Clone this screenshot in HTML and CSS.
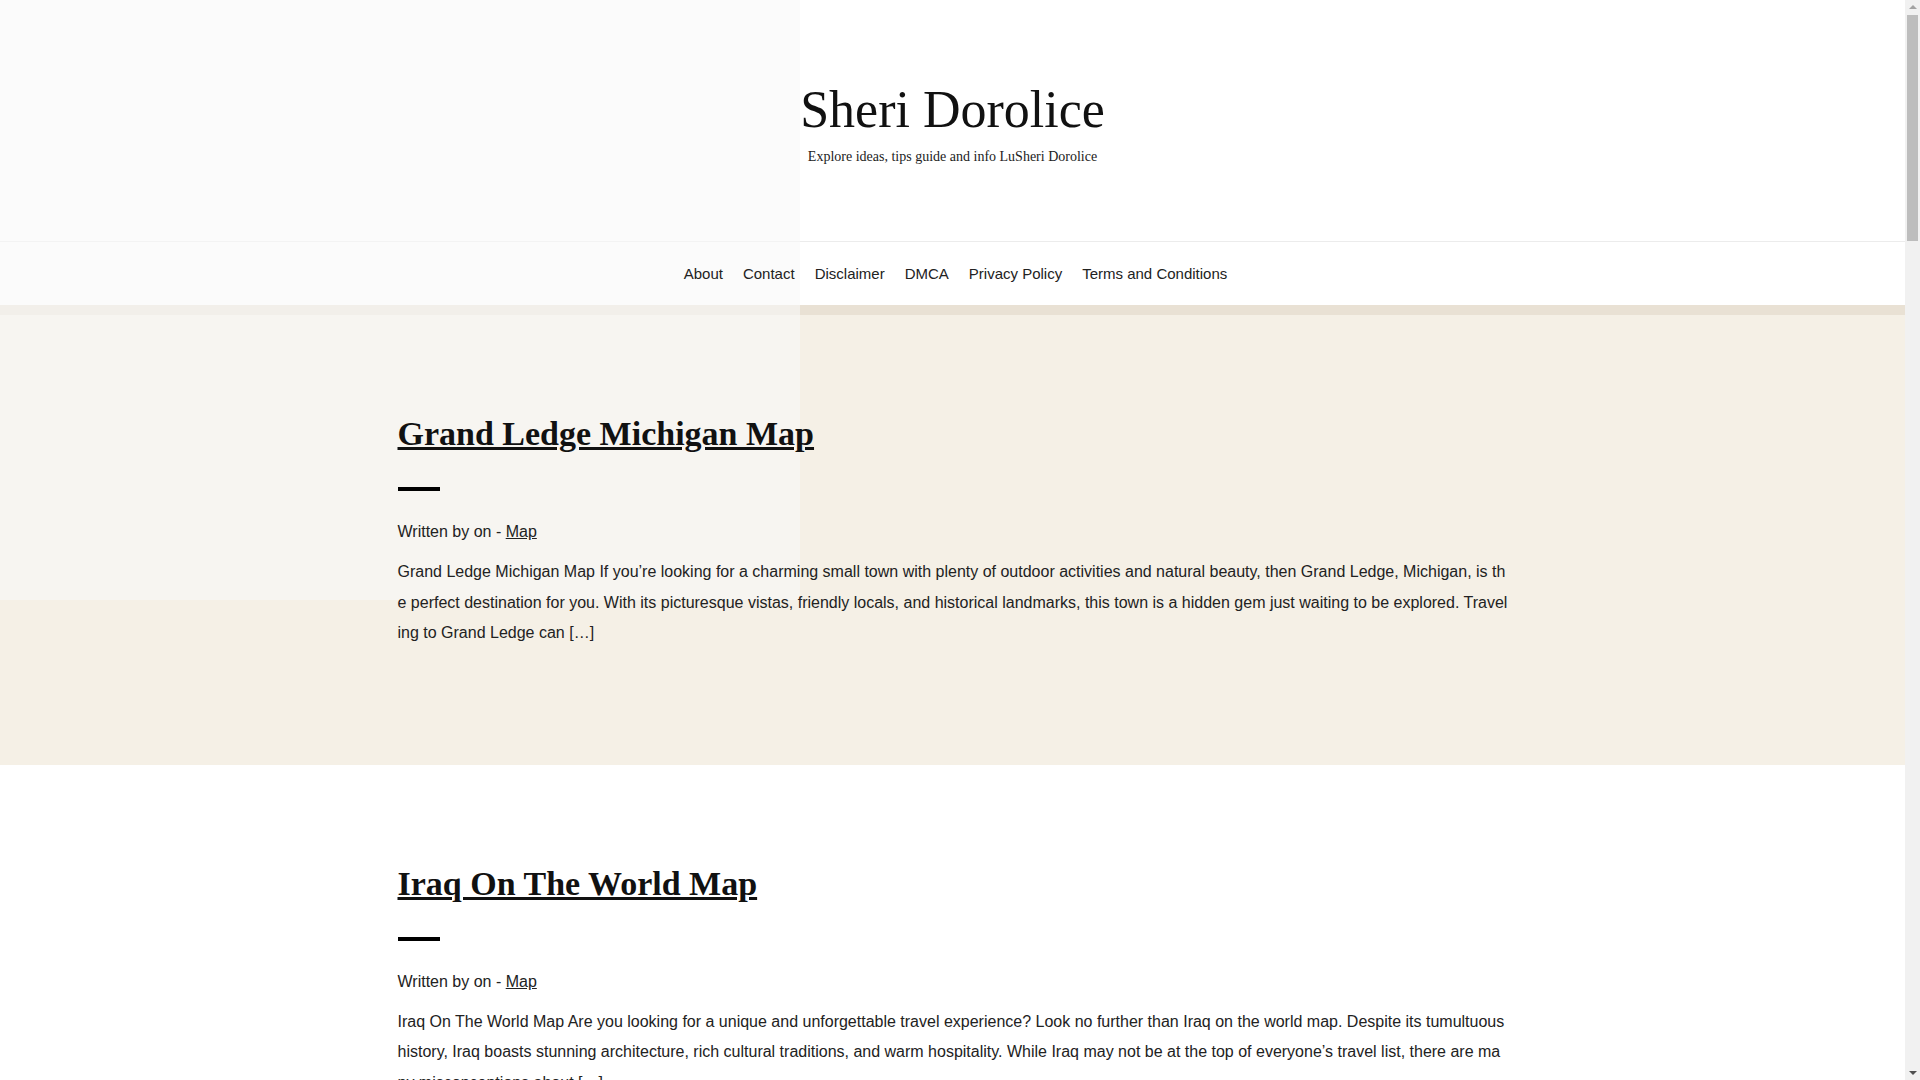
FILE: index.html
```html
<!DOCTYPE html>
<html lang="en">
<head>
  <meta charset="UTF-8">
  <title>Sheri Dorolice</title>
  <link rel="stylesheet" href="styles.css">
</head>
<body>

  <div class="page-shade"></div>

  <header class="site-header">
    <h1 class="site-title">Sheri Dorolice</h1>
    <p class="site-tagline">Explore ideas, tips guide and info LuSheri Dorolice</p>
  </header>

  <nav class="site-nav">
    <a href="#">About</a>
    <a href="#">Contact</a>
    <a href="#">Disclaimer</a>
    <a href="#">DMCA</a>
    <a href="#">Privacy Policy</a>
    <a href="#">Terms and Conditions</a>
  </nav>

  <div class="nav-band"></div>

  <main>
    <article class="post post-alt">
      <div class="container">
        <h2 class="post-title"><a href="#">Grand Ledge Michigan Map</a></h2>
        <div class="post-bar"></div>
        <p class="post-meta">Written by on - <a href="#">Map</a></p>
        <p class="post-excerpt">Grand Ledge Michigan Map If you’re looking for a charming small town with plenty of outdoor activities and natural beauty, then Grand Ledge, Michigan, is the perfect destination for you. With its picturesque vistas, friendly locals, and historical landmarks, this town is a hidden gem just waiting to be explored. Traveling to Grand Ledge can […]</p>
      </div>
    </article>

    <article class="post">
      <div class="container">
        <h2 class="post-title"><a href="#">Iraq On The World Map</a></h2>
        <div class="post-bar"></div>
        <p class="post-meta">Written by on - <a href="#">Map</a></p>
        <p class="post-excerpt">Iraq On The World Map Are you looking for a unique and unforgettable travel experience? Look no further than Iraq on the world map. Despite its tumultuous history, Iraq boasts stunning architecture, rich cultural traditions, and warm hospitality. While Iraq may not be at the top of everyone’s travel list, there are many misconceptions about […]</p>
      </div>
    </article>

    <article class="post post-alt">
      <div class="container">
        <h2 class="post-title"><a href="#">Map Of Lake Erie Islands</a></h2>
        <div class="post-bar"></div>
        <p class="post-meta">Written by on - <a href="#">Map</a></p>
        <p class="post-excerpt">Map Of Lake Erie Islands If you’re looking for a unique and relaxing vacation spot, look no further than the Lake Erie Islands. With stunning views, charming towns, and plenty of outdoor activities, this area has something for everyone. Whether you’re a nature lover or a history buff, the Lake Erie Islands are sure to […]</p>
      </div>
    </article>

    <article class="post">
      <div class="container">
        <h2 class="post-title"><a href="#">Map Of Italy And Sicily</a></h2>
        <div class="post-bar"></div>
        <p class="post-meta">Written by on - <a href="#">Map</a></p>
        <p class="post-excerpt">Map Of Italy And Sicily Italy and Sicily are two of the most popular destinations in Europe, known for their rich history, stunning architecture, and delicious cuisine. Whether you are a history buff, a foodie, or simply looking for a relaxing getaway, Italy and Sicily have something for everyone. In this article, we will […]</p>
      </div>
    </article>

    <article class="post post-alt">
      <div class="container">
        <h2 class="post-title"><a href="#">Map Of Waikiki Hotels</a></h2>
        <div class="post-bar"></div>
        <p class="post-meta">Written by on - <a href="#">Map</a></p>
        <p class="post-excerpt">Map Of Waikiki Hotels Waikiki, located on the south shore of Oahu, is one of the most popular tourist destinations in Hawaii. With its white sandy beaches, crystal clear waters, and vibrant nightlife, it’s no wonder that millions of visitors flock to this paradise every year. If you’re planning a trip to Waikiki, one of […]</p>
      </div>
    </article>

    <article class="post">
      <div class="container">
        <h2 class="post-title"><a href="#">Map Of Red River Nm</a></h2>
        <div class="post-bar"></div>
        <p class="post-meta">Written by on - <a href="#">Map</a></p>
        <p class="post-excerpt">Map Of Red River Nm If you’re looking for a mountain getaway with plenty of outdoor adventure, Red River, New Mexico should be at the top of your list. Nestled in the Sangre de Cristo Mountains, this small town offers skiing, hiking, fishing, and more. In this article, we’ll explore the best places to visit […]</p>
      </div>
    </article>

    <article class="post post-alt">
      <div class="container">
        <h2 class="post-title"><a href="#">Map Of Columbus Indiana</a></h2>
        <div class="post-bar"></div>
        <p class="post-meta">Written by on - <a href="#">Map</a></p>
        <p class="post-excerpt">Map Of Columbus Indiana Columbus, Indiana is a small city that packs a big punch when it comes to architecture, art, and culture. Known as the “Athens of the Prairie,” Columbus is home to over 70 buildings and public art pieces designed by world-renowned architects and artists. If you’re planning a trip to Columbus, here […]</p>
      </div>
    </article>

    <article class="post">
      <div class="container">
        <h2 class="post-title"><a href="#">Map Of Chicago Suburbs</a></h2>
        <div class="post-bar"></div>
        <p class="post-meta">Written by on - <a href="#">Map</a></p>
        <p class="post-excerpt">Map Of Chicago Suburbs Chicago is known for its iconic skyline, deep-dish pizza, and vibrant culture. However, the city’s suburbs also offer a unique and charming experience for travelers. From historic towns to scenic parks, the suburbs of Chicago have something for everyone. In this article, we will explore the best places to visit […]</p>
      </div>
    </article>

    <article class="post post-alt">
      <div class="container">
        <h2 class="post-title"><a href="#">Map Of Cuba And Florida</a></h2>
        <div class="post-bar"></div>
        <p class="post-meta">Written by on - <a href="#">Map</a></p>
        <p class="post-excerpt">Map Of Cuba And Florida Are you looking for a unique travel experience that combines the best of two worlds? Look no further than Cuba and Florida! These two destinations, separated by only 90 miles of ocean, offer a wealth of cultural, historical, and natural attractions. In this article, we’ll guide you through the best places […]</p>
      </div>
    </article>

    <article class="post">
      <div class="container">
        <h2 class="post-title"><a href="#">Map Of Sonoma Wineries</a></h2>
        <div class="post-bar"></div>
        <p class="post-meta">Written by on - <a href="#">Map</a></p>
        <p class="post-excerpt">Map Of Sonoma Wineries If you’re a wine lover, then Sonoma County should be at the top of your travel list. With over 400 wineries spread across its rolling hills and valleys, Sonoma offers a wine-tasting experience like no other. In this article, we’ll guide you through the best places to visit and local […]</p>
      </div>
    </article>
  </main>

  <!-- classic scrollbar, as the browser drew it -->
  <div class="scrollbar">
    <span class="scroll-arrow up"></span>
    <span class="scroll-thumb"></span>
    <span class="scroll-arrow down"></span>
  </div>

</body>
</html>
```

FILE: styles.css
```css
html, body {
  margin: 0;
  padding: 0;
}
body {
  margin-right: 15px;
  font-family: "Liberation Sans", Arial, sans-serif;
  color: #222;
  background: #fff;
}
a {
  color: inherit;
}

/* header */
.site-header {
  height: 242px;
  display: flex;
  flex-direction: column;
  align-items: center;
  padding-top: 83px;
  box-sizing: border-box;
  border-bottom: 1px solid #ececec;
  font-family: "Liberation Serif", "Times New Roman", serif;
  color: #111;
}
.site-title, .site-tagline {
  position: relative;
  z-index: 1;
}
.site-title {
  margin: 0;
  font-size: 52px;
  font-weight: normal;
  line-height: 54px;
}
.site-tagline {
  margin: 12px 0 0;
  font-size: 14px;
  color: #222;
}

/* nav */
.site-nav {
  height: 63px;
  padding-left: 6px;
  display: flex;
  justify-content: center;
  align-items: center;
}
.site-nav a {
  position: relative;
  z-index: 1;
  padding: 0 10px;
  font-size: 15px;
  color: #222;
  text-decoration: none;
}
.nav-band {
  height: 10px;
  background: #e9e1d4;
}

/* posts */
.post {
  padding: 99px 0 116px;
  background: #fff;
}
.post-alt {
  background: #f5f0e6;
}
.container {
  position: relative;
  z-index: 1;
  width: 1110px;
  margin: 0 auto;
}
.post-title {
  margin: 0;
  font-family: "Liberation Serif", "Times New Roman", serif;
  font-size: 34px;
  line-height: 40px;
  font-weight: bold;
  color: #111;
}
.post-bar {
  width: 42px;
  height: 4px;
  background: #000;
  margin: 33px 0 0;
}
.post-meta {
  margin: 31px 0 0;
  font-size: 16px;
  line-height: 20px;
}
.post-excerpt {
  margin: 15px 0 0;
  font-size: 16px;
  line-height: 30.5px;
  word-break: break-all;
}

/* faint panel behind the top-left corner */
.page-shade {
  position: absolute;
  left: 0;
  top: 0;
  width: 800px;
  height: 600px;
  background: rgba(248, 248, 248, 0.6);
  pointer-events: none;
}

/* scrollbar */
.scrollbar {
  position: fixed;
  top: 0;
  right: 0;
  width: 15px;
  height: 100vh;
  background: #f1f1f1;
  display: flex;
  flex-direction: column;
  align-items: center;
}
.scroll-arrow {
  width: 0;
  height: 0;
  border-left: 4px solid transparent;
  border-right: 4px solid transparent;
}
.scroll-arrow.up {
  margin-top: 5px;
  border-bottom: 4px solid #a3a3a3;
}
.scroll-arrow.down {
  margin-top: auto;
  margin-bottom: 5px;
  border-top: 4px solid #505050;
}
.scroll-thumb {
  width: 11px;
  height: 226px;
  margin-top: 6px;
  background: #bdbdbd;
}
```
